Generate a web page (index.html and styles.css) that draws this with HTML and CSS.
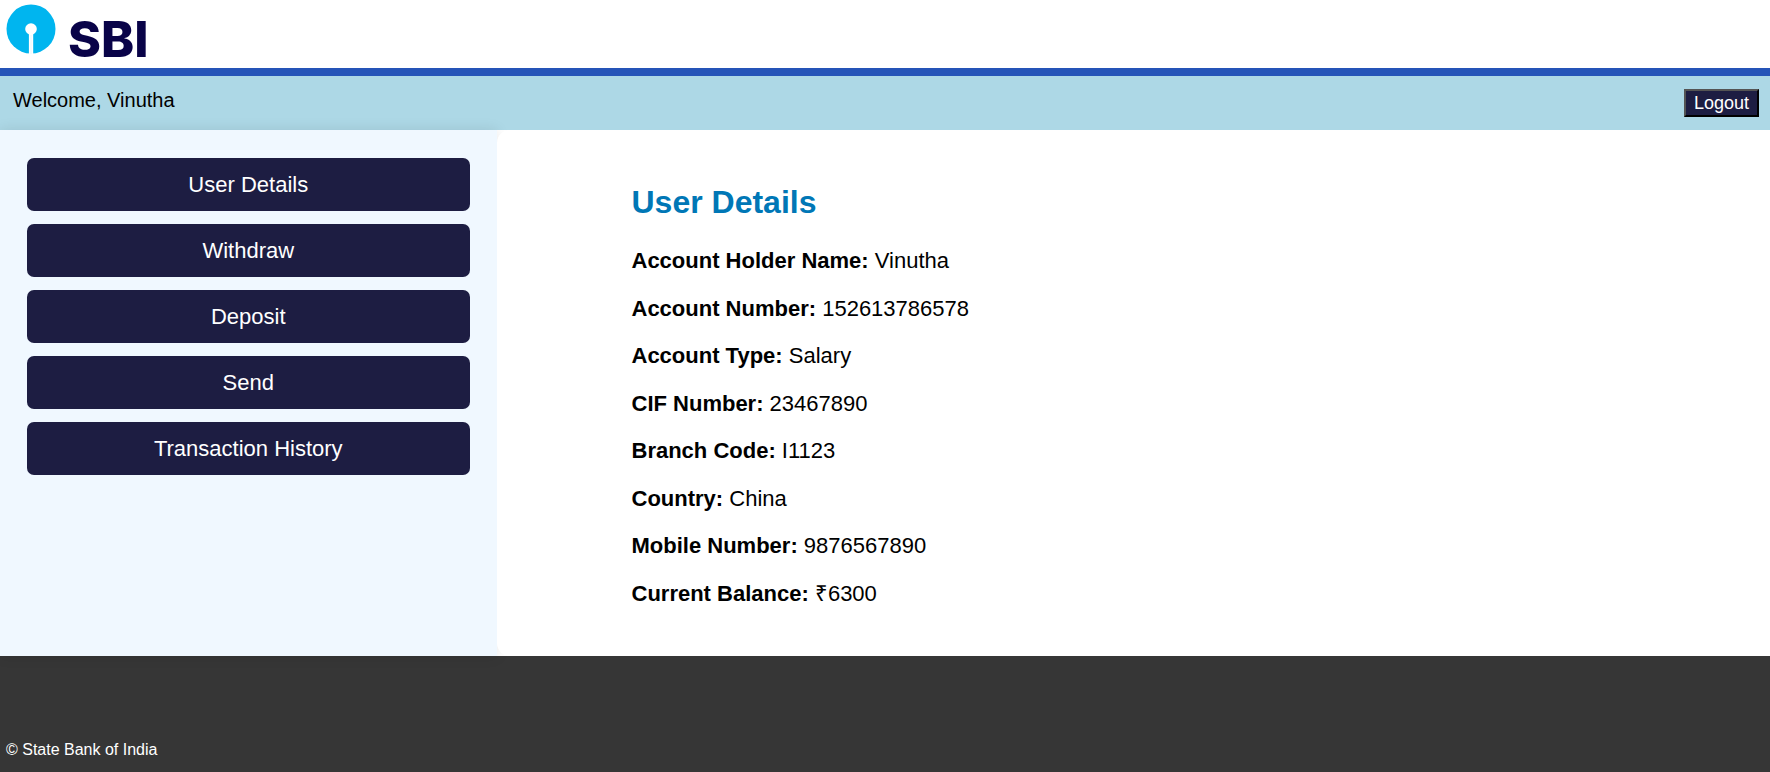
FILE: index.html
```html
<!DOCTYPE html>
<html lang="en">
<head>
<meta charset="utf-8">
<title>State Bank of India</title>
<link rel="stylesheet" href="styles.css">
</head>
<body>
<header class="header">
  <svg class="logo" width="50" height="50" viewBox="0 0 50 50" aria-hidden="true">
    <circle cx="25" cy="25" r="24.5" fill="#00b5ef"/>
    <circle cx="25" cy="25" r="5.8" fill="#fff"/>
    <rect x="22.9" y="26" width="4.3" height="24" fill="#fff"/>
    <path d="M25 31v19" stroke="#dff5fd" stroke-width="0.8"/>
  </svg>
  <span class="logo-text">SBI</span>
</header>
<div class="welcome-bar">
  <span class="welcome">Welcome, Vinutha</span>
  <button class="logout" type="button">Logout</button>
</div>
<main class="main">
  <nav class="sidebar">
    <button class="menu-item" type="button">User Details</button>
    <button class="menu-item" type="button">Withdraw</button>
    <button class="menu-item" type="button">Deposit</button>
    <button class="menu-item" type="button">Send</button>
    <button class="menu-item" type="button">Transaction History</button>
  </nav>
  <section class="panel">
    <h2 class="title">User Details</h2>
    <div class="details">
      <p class="row"><strong>Account Holder Name:</strong> Vinutha</p>
      <p class="row"><strong>Account Number:</strong> 152613786578</p>
      <p class="row"><strong>Account Type:</strong> Salary</p>
      <p class="row"><strong>CIF Number:</strong> 23467890</p>
      <p class="row"><strong>Branch Code:</strong> I1123</p>
      <p class="row"><strong>Country:</strong> China</p>
      <p class="row"><strong>Mobile Number:</strong> 9876567890</p>
      <p class="row"><strong>Current Balance:</strong> ₹6300</p>
    </div>
  </section>
</main>
<footer class="footer">© State Bank of India</footer>
</body>
</html>
```
FILE: styles.css
```css
* {
  box-sizing: border-box;
}

body {
  margin: 0;
  min-height: 100vh;
  display: flex;
  flex-direction: column;
  background: #fff;
  color: #000;
  font-family: "Liberation Sans", Arial, sans-serif;
}

.header {
  display: flex;
  align-items: flex-start;
  gap: 12px;
  padding: 4px 6px 0;
  border-bottom: 8px solid #2554b8;
}

.logo {
  display: block;
}

.logo-text {
  padding-top: 6px;
  color: #090348;
  font-family: Inter, sans-serif;
  font-size: 50px;
  font-weight: 800;
  line-height: 58px;
}

.welcome-bar {
  display: flex;
  justify-content: space-between;
  align-items: flex-start;
  padding: 13px 11px 13px 13px;
  background: #add8e6;
}

.welcome {
  font-size: 20px;
  line-height: 22px;
}

.logout {
  padding: 2px 8px;
  border: 2px outset #000;
  background: #1d1d42;
  color: #fff;
  font-family: inherit;
  font-size: 18px;
  line-height: 20px;
}

.main {
  flex: 1;
  display: flex;
}

.sidebar {
  position: relative;
  flex: none;
  width: calc(25% + 54px);
  display: flex;
  flex-direction: column;
  gap: 13px;
  padding: 28px 27px;
  background: #f0f8ff;
  box-shadow: 0 0 13px rgba(0, 0, 0, 0.1);
}

.menu-item {
  padding: 14px;
  border: 0;
  border-radius: 7px;
  background: #1d1d42;
  color: #fff;
  font-family: inherit;
  font-size: 22px;
  line-height: 25px;
}

.panel {
  position: relative;
  flex: 1;
  display: flex;
  flex-direction: column;
  gap: 29px;
  padding: 54px 27px 50px 135px;
  border-radius: 13px;
  background: #fff;
}

.title {
  margin: 0;
  color: #0077b6;
  font-size: 32px;
  line-height: 36px;
}

.details {
  flex: 1;
  display: flex;
  flex-direction: column;
  justify-content: space-between;
  font-size: 22px;
  line-height: 24px;
}

.row {
  margin: 0;
}

.footer {
  padding: 85px 6px 13px;
  background: #363636;
  color: #fff;
  font-size: 16px;
  line-height: 18px;
}
```
